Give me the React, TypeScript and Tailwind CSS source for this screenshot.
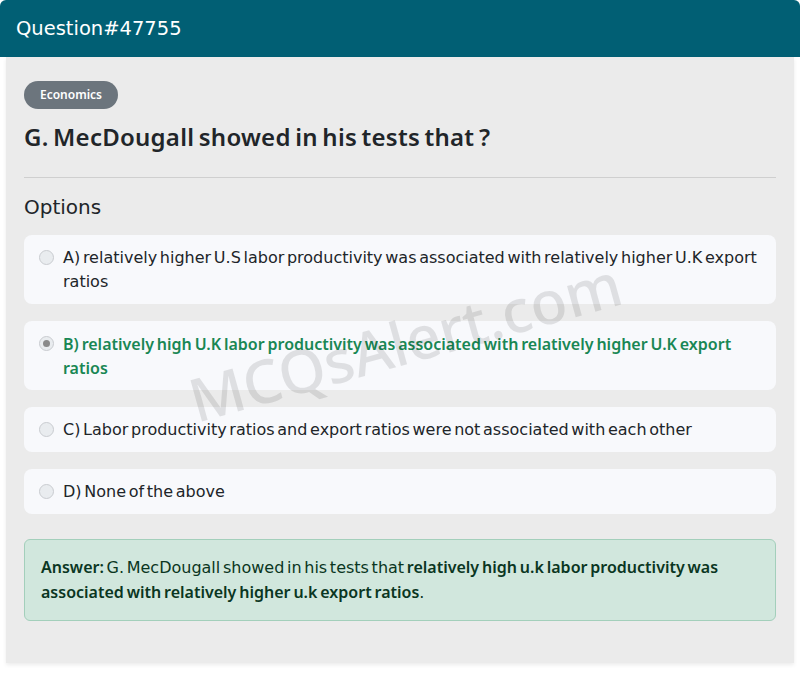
import React from 'react'

const options = [
  { key: 'A', text: 'relatively higher U.S labor productivity was associated with relatively higher U.K export ratios' },
  { key: 'B', text: 'relatively high U.K labor productivity was associated with relatively higher U.K export ratios', correct: true },
  { key: 'C', text: 'Labor productivity ratios and export ratios were not associated with each other' },
  { key: 'D', text: 'None of the above' },
]

const bold = '[font-family:"Noto_Sans",sans-serif] font-semibold [word-spacing:-0.08em]'

export default function App() {
  return (
    <div
      className="min-h-[693px] bg-white text-[#212529] [word-spacing:-0.15em]"
      style={{ fontFamily: '"DejaVu Sans", sans-serif' }}
    >
      <div className="flex h-[57px] items-center rounded-t-[6px] bg-[#015f74] px-4">
        <h1 className="text-[19.5px] text-white">Question#47755</h1>
      </div>

      <div className="relative mx-[6px] bg-[#ebebeb] px-[18px] pb-[42px] pt-6 shadow-[0_2px_4px_rgba(0,0,0,0.08)]">
        <span className={`inline-block rounded-full bg-[#6c757d] px-4 py-[5px] text-[12px] text-white ${bold}`}>
          Economics
        </span>
        <h2 className={`mt-[12px] text-[24px] leading-[32px] tracking-[0.01em] ${bold}`}>
          G. MecDougall showed in his tests that ?
        </h2>

        <hr className="mb-[15px] mt-[24px] border-[#cfcfcf]" />

        <h3 className="text-[20px] leading-[28px]">Options</h3>

        <div className="mt-[14px] flex flex-col gap-[17px]">
          {options.map((o) => (
            <div key={o.key} className="flex items-start gap-[9px] rounded-lg bg-[#f8f9fc] pb-[10px] pl-[15px] pr-4 pt-[11px]">
              <span className="mt-[4px] flex h-[15px] w-[15px] shrink-0 items-center justify-center rounded-full border border-[#c9ccd0] bg-[#e9ecef]">
                {o.correct && <span className="h-[7px] w-[7px] rounded-full bg-[#8a8a8a]" />}
              </span>
              <p className={`text-[16px] leading-[24px] ${o.correct ? `text-[#198754] ${bold}` : 'text-[#212529]'}`}>
                {o.key}) {o.text}
              </p>
            </div>
          ))}
        </div>

        <div className="mt-[25px] rounded-md border border-[#a3cfbb] bg-[#d1e7dd] px-4 py-[15px] text-[16px] leading-[24px] text-[#0a3622]">
          <span className={bold}>Answer:</span> G. MecDougall showed in his tests that{' '}
          <span className={bold}>
            relatively high u.k labor productivity was associated with relatively higher u.k export ratios
          </span>
          .
        </div>

        {/* watermark */}
        <div className="pointer-events-none absolute left-[176px] top-[248px] -rotate-[15.6deg] select-none whitespace-nowrap text-[60px] font-medium leading-[72px] text-black/10 [font-family:'Noto_Sans',sans-serif] [word-spacing:0]">
          MCQsAlert.com
        </div>
      </div>
    </div>
  )
}
